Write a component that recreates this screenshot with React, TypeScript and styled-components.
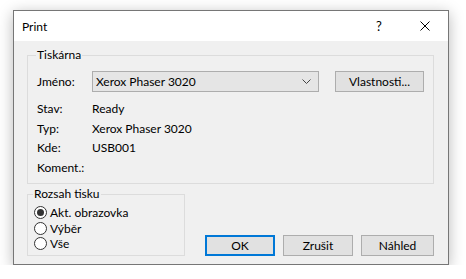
import { Fragment } from "react";
import styled, { createGlobalStyle } from "styled-components";

const GlobalStyle = createGlobalStyle`
  html, body {
    margin: 0;
    padding: 0;
    background: #ffffff;
  }
  body {
    font-family: "Segoe UI", Lato, "Noto Sans", sans-serif;
    font-size: 12px;
    color: #000;
  }
`;

const Page = styled.div`
  padding: 10px 0 0 13px;
`;

const Window = styled.div`
  width: 434px;
  border: 1px solid #767676;
  background: #f0f0f0;
  box-shadow: 0 3px 14px rgba(0, 0, 0, 0.28);
`;

const TitleBar = styled.div`
  height: 30px;
  background: #ffffff;
  display: flex;
  align-items: center;
  padding-left: 8px;
`;

const Title = styled.span`
  flex: 1;
  font-size: 12px;
`;

const TitleButton = styled.span`
  width: 46px;
  height: 30px;
  display: flex;
  align-items: center;
  justify-content: center;
  font-size: 13px;
`;

const Body = styled.div`
  padding: 6px 14px 8px 13px;
`;

const Group = styled.fieldset<{ $width?: number }>`
  margin: 0;
  border: 1px solid #dcdcdc;
  padding: ${({ $width }) => ($width ? "3px 6px 3px 6px" : "8px 9px 6px 9px")};
  ${({ $width }) => ($width ? `width: ${$width}px; box-sizing: border-box;` : "")}
  min-width: 0;
`;

const Legend = styled.legend`
  padding: 0 1px;
  margin-left: -1px;
  line-height: 16px;
`;

const NameRow = styled.div`
  display: flex;
  align-items: center;
  height: 21px;
`;

const Label = styled.span`
  width: 55px;
  flex-shrink: 0;
`;

const Spacer = styled.div`
  flex: 1;
`;

const Combo = styled.div`
  width: 227px;
  height: 21px;
  box-sizing: border-box;
  border: 1px solid #adadad;
  background: #e5e5e5;
  display: flex;
  align-items: center;
  padding: 0 7px 0 3px;
`;

const ComboText = styled.span`
  flex: 1;
`;

const Button = styled.button<{ $width: number; $default?: boolean }>`
  width: ${({ $width }) => $width}px;
  height: 21px;
  box-sizing: border-box;
  font-family: inherit;
  font-size: 12px;
  color: #000;
  background: #e1e1e1;
  border: ${({ $default }) => ($default ? "2px solid #0078d7" : "1px solid #adadad")};
  padding: 0;
`;

const InfoGrid = styled.div`
  display: grid;
  grid-template-columns: 55px 1fr;
  grid-auto-rows: 19.5px;
  align-items: center;
  margin-top: 7px;
`;

const BottomRow = styled.div`
  display: flex;
  align-items: flex-end;
  margin-top: 2px;
`;

const Buttons = styled.div`
  flex: 1;
  display: flex;
  justify-content: flex-end;
  gap: 8px;
`;

const RadioRow = styled.label`
  display: flex;
  align-items: center;
  height: 15.5px;
  gap: 3px;
`;

const RadioCircle = styled.span<{ $checked?: boolean }>`
  width: 13px;
  height: 13px;
  box-sizing: border-box;
  border: 1px solid #333;
  border-radius: 50%;
  background: #fff;
  display: flex;
  align-items: center;
  justify-content: center;
  &::after {
    content: "";
    width: 7px;
    height: 7px;
    border-radius: 50%;
    background: ${({ $checked }) => ($checked ? "#333" : "transparent")};
  }
`;

const info = [
  ["Stav:", "Ready"],
  ["Typ:", "Xerox Phaser 3020"],
  ["Kde:", "USB001"],
  ["Koment.:", ""],
];

const ranges = [
  { label: "Akt. obrazovka", checked: true },
  { label: "Výběr", checked: false },
  { label: "Vše", checked: false },
];

export default function App() {
  return (
    <Page>
      <GlobalStyle />
      <Window>
        <TitleBar>
          <Title>Print</Title>
          <TitleButton>?</TitleButton>
          <TitleButton>
            <svg width="10" height="10" viewBox="0 0 10 10">
              <path d="M0.5 0.5 L9.5 9.5 M9.5 0.5 L0.5 9.5" stroke="#000" strokeWidth="1" />
            </svg>
          </TitleButton>
        </TitleBar>
        <Body>
          <Group>
            <Legend>Tiskárna</Legend>
            <NameRow>
              <Label>Jméno:</Label>
              <Combo>
                <ComboText>Xerox Phaser 3020</ComboText>
                <svg width="9" height="5" viewBox="0 0 9 5">
                  <path d="M0.5 0.5 L4.5 4.5 L8.5 0.5" stroke="#444" fill="none" strokeWidth="1" />
                </svg>
              </Combo>
              <Spacer />
              <Button $width={89}>Vlastnosti...</Button>
            </NameRow>
            <InfoGrid>
              {info.map(([k, v]) => (
                <Fragment key={k}>
                  <span>{k}</span>
                  <span>{v}</span>
                </Fragment>
              ))}
            </InfoGrid>
          </Group>
          <BottomRow>
            <Group $width={158}>
              <Legend>Rozsah tisku</Legend>
              {ranges.map((r) => (
                <RadioRow key={r.label}>
                  <RadioCircle $checked={r.checked} />
                  {r.label}
                </RadioRow>
              ))}
            </Group>
            <Buttons>
              <Button $width={70} $default>OK</Button>
              <Button $width={70}>Zrušit</Button>
              <Button $width={73}>Náhled</Button>
            </Buttons>
          </BottomRow>
        </Body>
      </Window>
    </Page>
  );
}
